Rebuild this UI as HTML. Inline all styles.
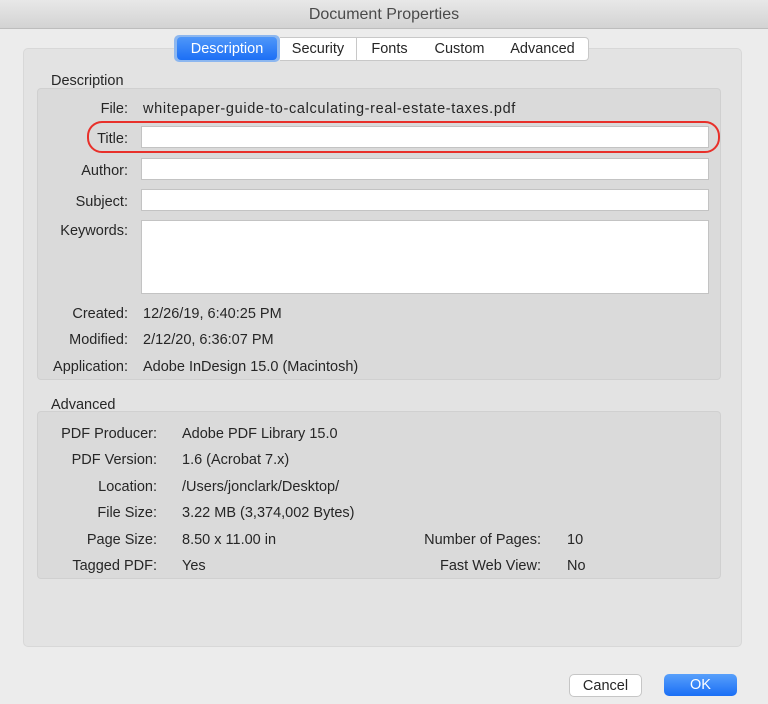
<!DOCTYPE html><html><head><style>
body{margin:0;width:768px;height:704px;background:#ececec;font-family:"Liberation Sans",sans-serif;font-size:14.5px;color:#262626;position:relative;overflow:hidden}
.a{position:absolute}
.tb{left:0;top:0;width:768px;height:28px;background:linear-gradient(#e8e8e8,#d3d3d3);border-bottom:1px solid #bdbdbd;text-align:center;line-height:29px;font-size:16px;color:#4a4a4a}
.box{background:#e3e3e3;border:1px solid #d8d8d8;border-radius:5px}
.in{background:#dadada;border:1px solid #d0d0d0;border-radius:4px}
.l{text-align:right;width:200px}
.l,.v{margin-top:2px}
.f{background:#fff;border:1px solid #c3c3c3;left:141px;width:566px;height:20px}
.tab{top:37px;height:22px;line-height:23px;text-align:center;background:#fff;border:1px solid #c8c8c8;border-left:none}
.btn{border-radius:5px;text-align:center;line-height:23px;height:22px}
</style></head><body>
<div class="a tb">Document Properties</div>
<div class="a box" style="left:23px;top:48px;width:717px;height:597px"></div>
<div class="a tab" style="left:280px;width:76px;border-radius:0">Security</div>
<div class="a tab" style="left:357px;width:65px">Fonts</div>
<div class="a tab" style="left:422px;width:75px">Custom</div>
<div class="a tab" style="left:497px;width:91px;border-radius:0 4px 4px 0">Advanced</div>
<div class="a" style="left:174px;top:35px;width:106px;height:27px;border-radius:5px;background:#8db7ef"></div>
<div class="a" style="left:177px;top:37px;width:100px;height:23px;line-height:24px;border-radius:4px;background:linear-gradient(#4f97f9,#1c6ff5);color:#fff;text-align:center">Description</div>
<div class="a v" style="left:51px;top:71px">Description</div>
<div class="a in" style="left:37px;top:88px;width:682px;height:290px"></div>
<div class="a l" style="left:-72px;top:99px">File:</div>
<div class="a v" style="left:143px;top:99px;letter-spacing:0.65px">whitepaper-guide-to-calculating-real-estate-taxes.pdf</div>
<div class="a l" style="left:-72px;top:129px">Title:</div>
<div class="a f" style="top:126px"></div>
<div class="a" style="left:87px;top:121px;width:629px;height:28px;border:2px solid #e8302a;border-radius:15px"></div>
<div class="a l" style="left:-72px;top:161px">Author:</div>
<div class="a f" style="top:158px"></div>
<div class="a l" style="left:-72px;top:192px">Subject:</div>
<div class="a f" style="top:189px"></div>
<div class="a l" style="left:-72px;top:221px">Keywords:</div>
<div class="a f" style="top:220px;height:72px"></div>
<div class="a l" style="left:-72px;top:304px">Created:</div><div class="a v" style="left:143px;top:304px">12/26/19, 6:40:25 PM</div>
<div class="a l" style="left:-72px;top:330px">Modified:</div><div class="a v" style="left:143px;top:330px">2/12/20, 6:36:07 PM</div>
<div class="a l" style="left:-72px;top:357px">Application:</div><div class="a v" style="left:143px;top:357px">Adobe InDesign 15.0 (Macintosh)</div>
<div class="a v" style="left:51px;top:395px">Advanced</div>
<div class="a in" style="left:37px;top:411px;width:682px;height:166px"></div>
<div class="a l" style="left:-43px;top:424px">PDF Producer:</div><div class="a v" style="left:182px;top:424px">Adobe PDF Library 15.0</div>
<div class="a l" style="left:-43px;top:450px">PDF Version:</div><div class="a v" style="left:182px;top:450px">1.6 (Acrobat 7.x)</div>
<div class="a l" style="left:-43px;top:477px">Location:</div><div class="a v" style="left:182px;top:477px">/Users/jonclark/Desktop/</div>
<div class="a l" style="left:-43px;top:503px">File Size:</div><div class="a v" style="left:182px;top:503px">3.22 MB (3,374,002 Bytes)</div>
<div class="a l" style="left:-43px;top:530px">Page Size:</div><div class="a v" style="left:182px;top:530px">8.50 x 11.00 in</div>
<div class="a l" style="left:-43px;top:556px">Tagged PDF:</div><div class="a v" style="left:182px;top:556px">Yes</div>
<div class="a l" style="left:341px;top:530px">Number of Pages:</div><div class="a v" style="left:567px;top:530px">10</div>
<div class="a l" style="left:341px;top:556px">Fast Web View:</div><div class="a v" style="left:567px;top:556px">No</div>
<div class="a btn" style="left:569px;top:674px;width:71px;background:#fff;border:1px solid #c6c6c6;height:21px;line-height:22px">Cancel</div>
<div class="a btn" style="left:664px;top:674px;width:73px;background:linear-gradient(#58a0fb,#1a6ef5);color:#fff">OK</div>
</body></html>
